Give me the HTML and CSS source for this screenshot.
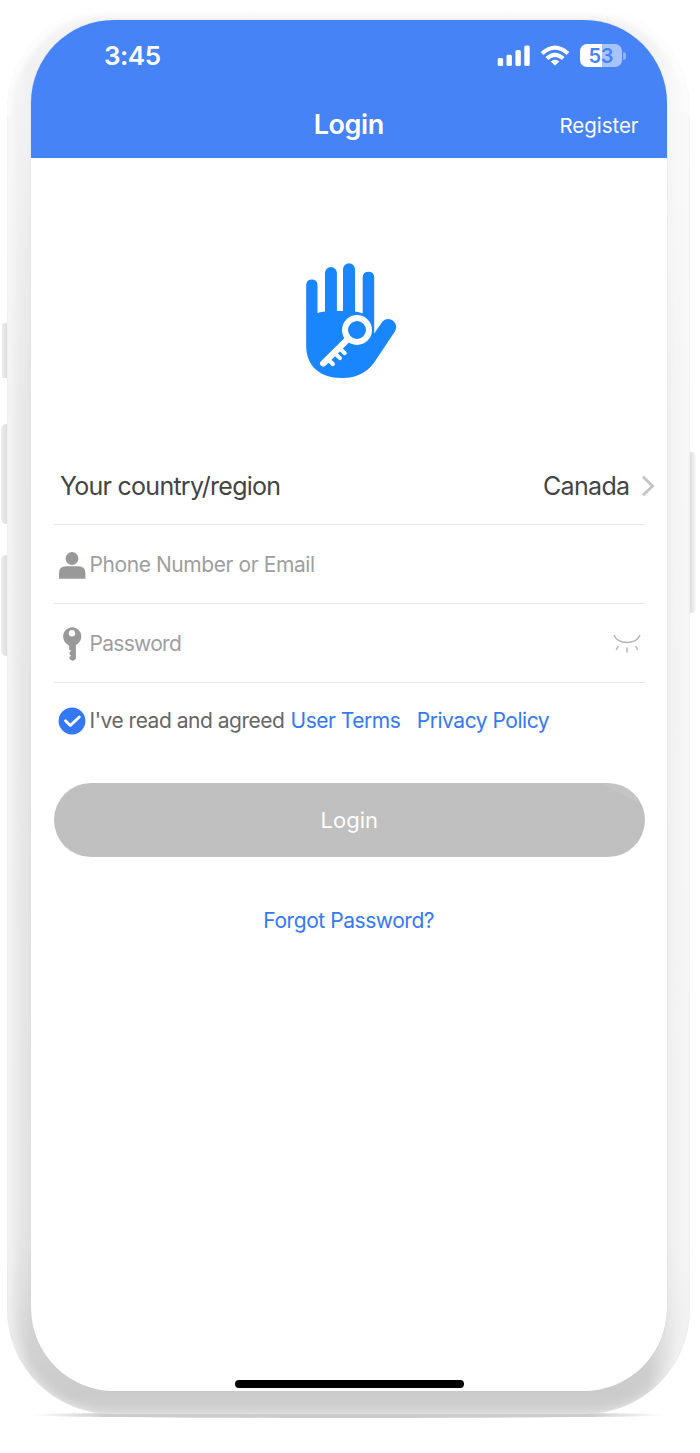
FILE: index.html
```html
<!DOCTYPE html>
<html lang="en">
<head>
<meta charset="utf-8">
<title>Login</title>
<link rel="stylesheet" href="styles.css">
</head>
<body>
<div class="stage">
  <span class="side-button mute"></span>
  <span class="side-button volume-up"></span>
  <span class="side-button volume-down"></span>
  <span class="side-button power"></span>
  <span class="ground"></span>
  <main class="phone">
    <div class="screen">
      <header class="header">
        <div class="status">
          <span class="clock">3:45</span>
          <svg class="signal" viewBox="0 0 34 22" width="34" height="22" fill="#fff">
            <rect x=".7" y="13" width="5.4" height="8" rx="1.6"/><rect x="9.5" y="9.8" width="5.4" height="11.2" rx="1.6"/><rect x="18.4" y="5.1" width="5.4" height="15.9" rx="1.6"/><rect x="27.3" y=".5" width="5.4" height="20.5" rx="1.6"/>
          </svg>
          <svg class="wifi" viewBox="0 0 30 22" width="30" height="22" fill="none" stroke="#fff" stroke-width="4">
            <path d="M2 8.6Q15 -3.2 28 8.6"/><path d="M6.8 13.5Q15 6.2 23.2 13.5"/><path d="M15 20.6L10.6 16.6Q15 12.8 19.4 16.6Z" fill="#fff" stroke="none"/>
          </svg>
          <div class="battery"><span class="level"><span class="digit-left">5</span><span class="digit-right">3</span></span><span class="tip"></span></div>
        </div>
        <div class="nav">
          <h1 class="title">Login</h1>
          <a class="register">Register</a>
        </div>
      </header>
      <div class="logo">
        <svg viewBox="0 0 120 140" width="120" height="140">
          <g fill="#1a86fd">
            <path d="M16.2 34.5A5.7 5.7 0 0 1 27.5 34.5V63Q31 61.9 35 61.5V23A5.9 5.9 0 0 1 46.9 23V61H53V19.2A6 6 0 0 1 65 19.2V61.5Q69 62 72.7 63.5V26.8A5.8 5.8 0 0 1 84.2 26.8V83.5L92.5 71.5A8 8 0 0 1 105.2 81L87.5 107.5C79.5 121 69 128 52 128C29 128 16.2 115 16.2 96Z"/>
          </g>
          <circle cx="67" cy="80" r="12" fill="none" stroke="#fff" stroke-width="6"/>
          <g fill="none" stroke="#fff" stroke-linecap="round">
            <path d="M58 89L33.2 113.4" stroke-width="6.3"/>
            <path d="M50 98.5L54.8 103.2M45 103.5L50 108.1" stroke-width="4"/>
            <path d="M38.5 109.8L42.8 114" stroke-width="4.3"/>
          </g>
        </svg>
      </div>
      <form class="form">
        <div class="row country">
          <span class="country-label">Your country/region</span>
          <span class="country-name">Canada</span>
          <svg class="chevron" viewBox="0 0 14 22" width="14" height="22" fill="none" stroke="#c3c3c3" stroke-width="2.7"><path d="M2 1.7L11.6 11L2 20.3"/></svg>
        </div>
        <div class="row field">
          <svg class="field-icon" viewBox="0 0 28 34" width="28" height="34" fill="#999"><circle cx="14" cy="10.5" r="6.4"/><path d="M1 30.7V25Q1 18.3 8 18.3H20.5Q27.4 18.3 27.4 25V30.7Z"/></svg>
          <span class="placeholder phone-text">Phone Number or Email</span>
        </div>
        <div class="row field">
          <svg class="field-icon" viewBox="0 0 28 34" width="28" height="34"><path fill="#999" fill-rule="evenodd" d="M14 .2A9.4 9.4 0 0 1 17.9 18.1V31.8L14.8 34L11.5 32V30L13.2 28.7L11.5 27.2V25.5L13.2 24L11.2 22.7V18.4A9.4 9.4 0 0 1 14 .2ZM14 3A3.2 3.2 0 1 0 14 9.4A3.2 3.2 0 1 0 14 3Z"/></svg>
          <span class="placeholder password-text">Password</span>
          <svg class="eye" viewBox="0 0 28 20" width="28" height="20" fill="none" stroke="#b5b5b5" stroke-width="1.5"><path d="M1 1C5 11 23 11 27 1M5.3 12L3.2 16M14 13.4V18.4M22.7 12L24.8 16"/></svg>
        </div>
        <div class="agreement">
          <svg class="check" viewBox="0 0 28 28" width="28" height="28"><circle cx="14" cy="14" r="13.4" fill="#3478f6"/><path d="M7.5 13.8L12.3 18.5L21.3 10" fill="none" stroke="#fff" stroke-width="2.8" stroke-linecap="round" stroke-linejoin="round"/></svg>
          <span class="agree-text">I've read and agreed</span>
          <a class="terms">User Terms</a>
          <a class="privacy">Privacy Policy</a>
        </div>
        <button class="submit" type="button">Login</button>
        <a class="forgot">Forgot Password?</a>
      </form>
      <div class="home-indicator"></div>
    </div>
  </main>
</div>
</body>
</html>
```
FILE: styles.css
```css
* { box-sizing: border-box; }
body { margin: 0; background: #fff; font-family: Inter, Roboto, sans-serif; }
.stage { position: relative; width: 700px; height: 1453px; padding: 6px 9px 39px 7px; overflow: hidden; }
.phone {
  position: relative; width: 683px; height: 1408px; padding: 13.5px 23.5px 23px 24px; border-radius: 105px;
  background:
    linear-gradient(to right, rgba(255,255,255,.4), rgba(255,255,255,0) 24px, rgba(255,255,255,0) 640px, rgba(255,255,255,.6) 670px),
    linear-gradient(#fff 0, #f3f3f3 14px, #efefef 130px, #e5e5e5 400px, #e1e1e1 1230px, #cdcdcd 1370px, #cbcbcb 1388px, #d2d2d2 1408px);
  box-shadow: inset 0 0 2px #e2e2e2, inset 8px 0 12px -3px rgba(255,255,255,.5), inset -8px 0 14px -3px rgba(255,255,255,.4);
}
.phone::before { content: ""; position: absolute; left: 0; right: 0; top: 0; height: 110px; border-radius: 105px 105px 0 0; box-shadow: inset 0 7px 9px #fff; }
.side-button { position: absolute; background: linear-gradient(to right, #eee, #ddd); }
.mute { left: 2px; top: 323px; width: 5px; height: 55px; }
.volume-up { left: 1px; top: 424px; width: 6px; height: 100px; border-radius: 5px 0 0 5px; }
.volume-down { left: 1px; top: 555px; width: 6px; height: 101px; border-radius: 5px 0 0 5px; }
.power { left: 690px; top: 452px; width: 6px; height: 161px; border-radius: 0 5px 4px 0; background: linear-gradient(to right, #ddd, #fafafa); }
.ground { position: absolute; left: 31px; top: 1412px; width: 634px; height: 6px; border-radius: 50%; background: linear-gradient(to right, #fff, #ccc 12%, #ccc 88%, #fff); box-shadow: 0 12px 18px -4px #eee; filter: blur(.6px); }
.screen { position: relative; display: flex; flex-direction: column; width: 635.5px; height: 1371.5px; border-radius: 83px; overflow: hidden; background: #fff; box-shadow: 0 0 1px #bbb; }
.header { flex: none; height: 138px; background: #4583f7; color: #fff; }
.status { display: flex; align-items: center; height: 72px; padding: 0 40.5px 0 73px; }
.clock { flex: 1; font-size: 26px; font-weight: 600; letter-spacing: -.5px; line-height: 32px; padding-top: 1px; }
.wifi { margin: 0 10px 0 9px; }
.battery { display: flex; align-items: center; gap: 1px; }
.level { display: flex; justify-content: center; align-items: center; width: 42.5px; height: 23px; padding-top: 1.5px; border-radius: 7px; background: linear-gradient(to right, #fff 52%, #a7c5fc 52%); font-size: 20px; line-height: 23px; font-weight: 600; letter-spacing: -.3px; color: #4583f7; }
.tip { width: 3px; height: 8px; border-radius: 0 3px 3px 0; background: #8db3fb; }
.nav { display: grid; grid-template-columns: 1fr auto 1fr; align-items: center; height: 66px; padding-right: 28px; padding-left: 28px; }
.title { grid-column: 2; margin: 0; font-size: 27px; line-height: 66px; font-weight: 600; letter-spacing: -.4px; }
.register { justify-self: end; padding-top: 1px; font-size: 20.5px; letter-spacing: -.05px; }
.logo { flex: none; display: flex; justify-content: center; height: 290px; padding-top: 92.5px; padding-left: 2.5px; }
.form { display: flex; flex-direction: column; width: 590.5px; margin-left: 23px; color: #444; }
.row { display: flex; align-items: center; height: 79px; padding-left: 4px; border-bottom: 1.5px solid #e8e8e8; }
.field { padding-top: 2px; }
.country { height: 77px; padding-top: 1px; padding-left: 6px; font-size: 25px; }
.country-label { letter-spacing: -.74px; }
.country-name { margin-left: auto; letter-spacing: -.65px; }
.chevron { flex: none; margin: 0 -10.5px 0 11.5px; }
.field-icon, .check { flex: none; margin-right: 3.5px; }
.placeholder { font-size: 21px; color: #9e9e9e; }
.phone-text { letter-spacing: -.42px; }
.password-text { letter-spacing: -.7px; }
.eye { margin-left: auto; margin-right: 4px; }
.agreement { display: flex; align-items: center; height: 76px; padding-left: 4px; font-size: 21px; color: #666; white-space: nowrap; letter-spacing: -.48px; }
.agreement a, .forgot { color: #3478f6; }
.terms { margin-left: 6px; }
.privacy { margin-left: 16.5px; }
.submit { height: 74px; margin-top: 24px; padding: 0; border: 0; border-radius: 37px; background: linear-gradient(28deg, #c0c0c0 0 94%, #c4c4c4 94%); font: 22px Inter, Roboto, sans-serif; color: #fff; }
.forgot { align-self: center; margin-top: 50px; margin-right: 1px; font-size: 21px; line-height: 28px; letter-spacing: -.44px; }
.home-indicator { width: 229px; height: 8px; margin: auto auto 3px 204px; border-radius: 4px; background: #000; }
```
